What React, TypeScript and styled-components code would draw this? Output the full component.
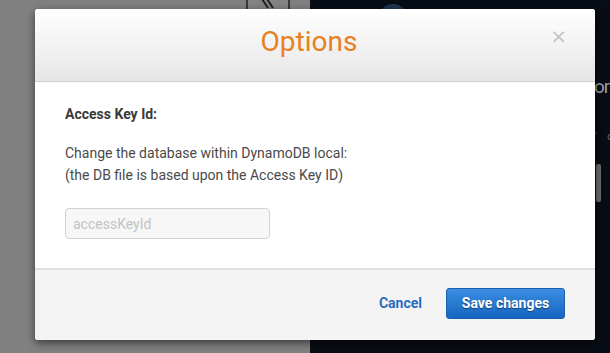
import React from "react";
import styled, { createGlobalStyle } from "styled-components";

const Global = createGlobalStyle`
  html, body { margin: 0; padding: 0; }
  body { font-family: Roboto, "Liberation Sans", sans-serif; overflow: hidden; }
  * { box-sizing: border-box; }
`;

const Page = styled.div`
  display: flex;
  width: 610px;
  height: 353px;
  position: relative;
  overflow: hidden;
`;

const MainArea = styled.div`
  width: 310px;
  background: #808080;
  display: flex;
  align-items: flex-start;
  padding-left: 246px;
`;

const ToolBox = styled.div`
  width: 44px;
  height: 10px;
  background: #838383;
  border: 2px solid #3a3a3a;
  border-top: none;
  border-bottom: none;
  display: flex;
  justify-content: center;
  overflow: hidden;
`;

const SideArea = styled.div`
  flex: 1;
  background: #080c14;
  position: relative;
  color: #8a8e94;
`;

const Avatar = styled.div`
  position: absolute;
  left: 68px;
  top: 4px;
  width: 30px;
  height: 30px;
  border-radius: 50%;
  background: #1c3550;
`;

const SideTitle = styled.div`
  position: absolute;
  left: 284px;
  top: 75px;
  font-size: 19px;
  letter-spacing: -1px;
  white-space: nowrap;
  color: #9a9ea4;
`;

const SideNote = styled.div`
  position: absolute;
  left: 285px;
  top: 131px;
  font-size: 10px;
  letter-spacing: 4px;
  white-space: nowrap;
  color: #6c7076;
`;

const SideBar = styled.div`
  position: absolute;
  left: 286px;
  top: 164px;
  width: 5px;
  height: 38px;
  border-radius: 2px;
  background: #6a6a6a;
`;

const Overlay = styled.div`
  position: absolute;
  inset: 0;
  padding: 9px 0 0 35px;
`;

const Modal = styled.div`
  width: 560px;
  height: 331px;
  display: flex;
  flex-direction: column;
  background: #fff;
  border-radius: 3px;
  box-shadow: 0 3px 9px rgba(0, 0, 0, 0.55);
  overflow: hidden;
`;

const Header = styled.div`
  height: 73px;
  position: relative;
  display: flex;
  align-items: center;
  justify-content: center;
  background: linear-gradient(#ffffff, #e6e6e6);
  border-bottom: 1px solid #cfcfcf;
`;

const Title = styled.h4`
  margin: 0 0 8px 0;
  font-family: Roboto, "Liberation Sans", sans-serif;
  font-weight: 400;
  font-size: 28px;
  color: #e8801e;
  padding-right: 12px;
`;

const Close = styled.button`
  position: absolute;
  right: 28px;
  top: 17px;
  border: none;
  background: none;
  padding: 0;
  font-size: 20px;
  line-height: 20px;
  color: #c4c4c4;
  font-family: "DejaVu Sans", sans-serif;
`;

const Body = styled.div`
  flex: 1;
  padding: 24px 30px 0 30px;
  color: #444;
  font-size: 14px;
`;

const Label = styled.div`
  font-weight: 700;
  color: #3a3a3a;
  margin-bottom: 20px;
`;

const Help = styled.p`
  margin: 0 0 22px 0;
  line-height: 22px;
  color: #4a4a4a;
`;

const Input = styled.input`
  width: 205px;
  height: 31px;
  border: 1px solid #d2d2d2;
  border-radius: 4px;
  background: #f7f7f7;
  padding: 0 7px;
  font-family: Roboto, "Liberation Sans", sans-serif;
  font-size: 14px;
  &::placeholder { color: #c2c2c2; }
`;

const Footer = styled.div`
  height: 72px;
  background: #f4f4f4;
  border-top: 2px solid #e0e0e0;
  display: flex;
  align-items: center;
  justify-content: flex-end;
  gap: 24px;
  padding: 0 30px 4px 0;
`;

const LinkButton = styled.button`
  border: none;
  background: none;
  font-family: Roboto, "Liberation Sans", sans-serif;
  font-weight: 700;
  font-size: 14px;
  color: #2a6cbf;
  padding: 0;
`;

const PrimaryButton = styled.button`
  width: 119px;
  height: 31px;
  border: 1px solid #1a5fae;
  border-radius: 3px;
  background: linear-gradient(#3b8ee2, #1565c0);
  color: #fff;
  font-family: Roboto, "Liberation Sans", sans-serif;
  font-weight: 700;
  font-size: 14px;
  text-shadow: 0 1px 1px rgba(0, 0, 0, 0.45);
`;

export default function App() {
  return (
    <>
      <Global />
      <Page>
        <MainArea>
          <ToolBox>
            <svg width="20" height="10" viewBox="0 0 20 10">
              <path d="M2 -4 L10 8 M7 -4 L15 8" stroke="#1a1a1a" strokeWidth="1.8" />
            </svg>
          </ToolBox>
        </MainArea>
        <SideArea>
          <Avatar />
          <SideTitle>om</SideTitle>
          <SideNote>' c</SideNote>
          <SideBar />
        </SideArea>
        <Overlay>
          <Modal>
            <Header>
              <Title>Options</Title>
              <Close aria-label="close">×</Close>
            </Header>
            <Body>
              <Label>Access Key Id:</Label>
              <Help>
                Change the database within DynamoDB local:
                <br />
                (the DB file is based upon the Access Key ID)
              </Help>
              <Input placeholder="accessKeyId" />
            </Body>
            <Footer>
              <LinkButton>Cancel</LinkButton>
              <PrimaryButton>Save changes</PrimaryButton>
            </Footer>
          </Modal>
        </Overlay>
      </Page>
    </>
  );
}
